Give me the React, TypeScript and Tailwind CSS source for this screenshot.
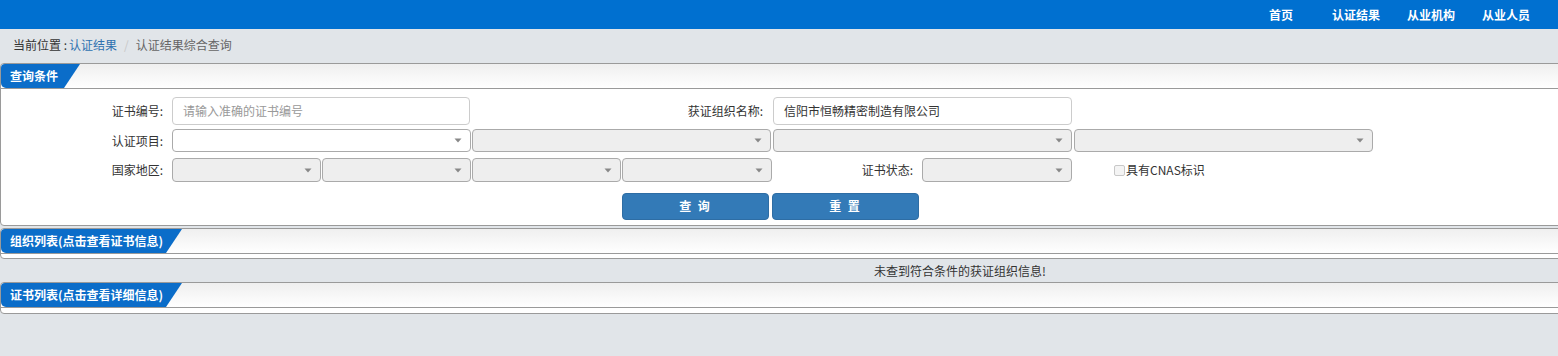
import type React from "react";

const FONT = { fontFamily: '"Noto Sans CJK SC", "Liberation Sans", sans-serif' };

const navItems = ["首页", "认证结果", "从业机构", "从业人员"];

function Arrow() {
  return (
    <svg width="8" height="5" viewBox="0 0 8 5" className="shrink-0">
      <path d="M0.5 0.5 L7.5 0.5 L4 4.5 Z" fill="#888" />
    </svg>
  );
}

type SelectProps = { disabled?: boolean; className?: string };

const FakeSelect: React.FC<SelectProps> = ({ disabled = true, className = "" }) => (
  <div
    className={[
      "flex items-center justify-end pr-[8px] border border-[#aaa] rounded-[4px] h-full",
      disabled ? "bg-[#eee]" : "bg-white",
      className,
    ].join(" ")}
  >
    <Arrow />
  </div>
);

function Label({ children, className = "" }: { children: React.ReactNode; className?: string }) {
  return (
    <div className={"flex items-center justify-end pr-[9px] text-[12px] text-[#333] " + className}>
      {children}
    </div>
  );
}

function PanelHeader({ title, width }: { title: string; width: string }) {
  return (
    <div className="h-[25px] border-b border-[#9a9a9a] bg-gradient-to-b from-[#efefef] to-white rounded-t-[4px]">
      <div
        className={
          "h-[24px] rounded-tl-[4px] rounded-bl-[5px] bg-[#0b6dc9] text-white text-[12px] font-bold flex items-center pl-[9px] [clip-path:polygon(0_0,100%_0,calc(100%-16px)_100%,0_100%)] " +
          width
        }
      >
        {title}
      </div>
    </div>
  );
}

export default function App() {
  return (
    <div className="w-full h-[356px] overflow-hidden bg-[#e1e5e9]" style={FONT}>
      {/* top nav */}
      <div className="h-[29px] bg-[#0070d0] flex items-center justify-end pr-[28px]">
        <div className="flex items-center gap-[27px] text-white text-[12px] font-bold">
          {navItems.map((item, i) => (
            <span key={item} className={i === 0 ? "mr-[12px]" : ""}>
              {item}
            </span>
          ))}
        </div>
      </div>

      {/* breadcrumb */}
      <div className="h-[34px] flex items-center pl-[13px] pb-[3px] text-[12px]">
        <span className="text-[#333]">当前位置 : </span>
        <span className="text-[#2f72b0] ml-[2px]">认证结果</span>
        <span className="text-[#c8c8c8] px-[7px]">/</span>
        <span className="text-[#666]">认证结果综合查询</span>
      </div>

      <div className="w-[1920px]">
        {/* search panel */}
        <div className="border border-[#9a9a9a] rounded-[4px] bg-white">
          <PanelHeader title="查询条件" width="w-[79px]" />
          <div className="pt-[8px] pb-[6px] grid grid-cols-[171px_repeat(8,150px)]">
            {/* row 1 */}
            <Label className="h-[28px]">证书编号:</Label>
            <div className="col-span-2 h-[28px]">
              <div className="h-full w-[298px] border border-[#ccc] rounded-[4px] flex items-center pl-[10px] text-[12px] text-[#999]">
                请输入准确的证书编号
              </div>
            </div>
            <Label className="col-span-2 h-[28px]">获证组织名称:</Label>
            <div className="col-span-2 h-[28px] pl-[1px]">
              <div className="h-full w-[299px] border border-[#ccc] rounded-[4px] flex items-center pl-[10px] text-[12px] text-[#333]">
                信阳市恒畅精密制造有限公司
              </div>
            </div>
            <div className="col-span-2" />

            {/* row 2 */}
            <Label className="h-[23px] mt-[4px]">认证项目:</Label>
            <div className="col-span-2 h-[23px] mt-[4px]">
              <FakeSelect disabled={false} className="w-[299px]" />
            </div>
            <div className="col-span-2 h-[23px] mt-[4px]">
              <FakeSelect className="w-[299px]" />
            </div>
            <div className="col-span-2 h-[23px] mt-[4px] pl-[1px]">
              <FakeSelect className="w-[299px]" />
            </div>
            <div className="col-span-2 h-[23px] mt-[4px] pl-[2px]">
              <FakeSelect className="w-[299px]" />
            </div>

            {/* row 3 */}
            <Label className="h-[24px] mt-[6px]">国家地区:</Label>
            <div className="h-[24px] mt-[6px]">
              <FakeSelect className="w-[149px]" />
            </div>
            <div className="h-[24px] mt-[6px]">
              <FakeSelect className="w-[149px]" />
            </div>
            <div className="h-[24px] mt-[6px]">
              <FakeSelect className="w-[149px]" />
            </div>
            <div className="h-[24px] mt-[6px]">
              <FakeSelect className="w-[150px]" />
            </div>
            <Label className="h-[24px] mt-[6px]">证书状态:</Label>
            <div className="h-[24px] mt-[6px]">
              <FakeSelect className="w-[150px]" />
            </div>
            <div className="h-[24px] mt-[6px] flex items-center pl-[42px] text-[12px] text-[#333]">
              <span className="inline-block w-[11px] h-[11px] border border-[#c8c8c8] rounded-[2px] bg-[#f4f4f4] mr-[1px]" />
              具有CNAS标识
            </div>
            <div />

            {/* row 4 buttons */}
            <div className="col-start-5 mt-[10px] h-[27px]">
              <button className="h-full w-[147px] bg-[#337ab7] border border-[#2e6da4] rounded-[4px] text-white text-[12px] font-bold tracking-[2px]">
                查 询
              </button>
            </div>
            <div className="mt-[10px] h-[27px]">
              <button className="h-full w-[147px] bg-[#337ab7] border border-[#2e6da4] rounded-[4px] text-white text-[12px] font-bold tracking-[2px]">
                重 置
              </button>
            </div>
          </div>
        </div>

        {/* org list */}
        <div className="mt-[2px] border border-[#9a9a9a] rounded-[4px] bg-white">
          <PanelHeader title="组织列表(点击查看证书信息)" width="w-[181px]" />
          <div className="h-[4px]" />
        </div>

        <div className="h-[23px] flex items-center justify-center text-[12px] text-[#333]">
          未查到符合条件的获证组织信息!
        </div>

        {/* cert list */}
        <div className="border border-[#9a9a9a] rounded-[4px] bg-white">
          <PanelHeader title="证书列表(点击查看详细信息)" width="w-[181px]" />
          <div className="h-[5px]" />
        </div>
      </div>
    </div>
  );
}
